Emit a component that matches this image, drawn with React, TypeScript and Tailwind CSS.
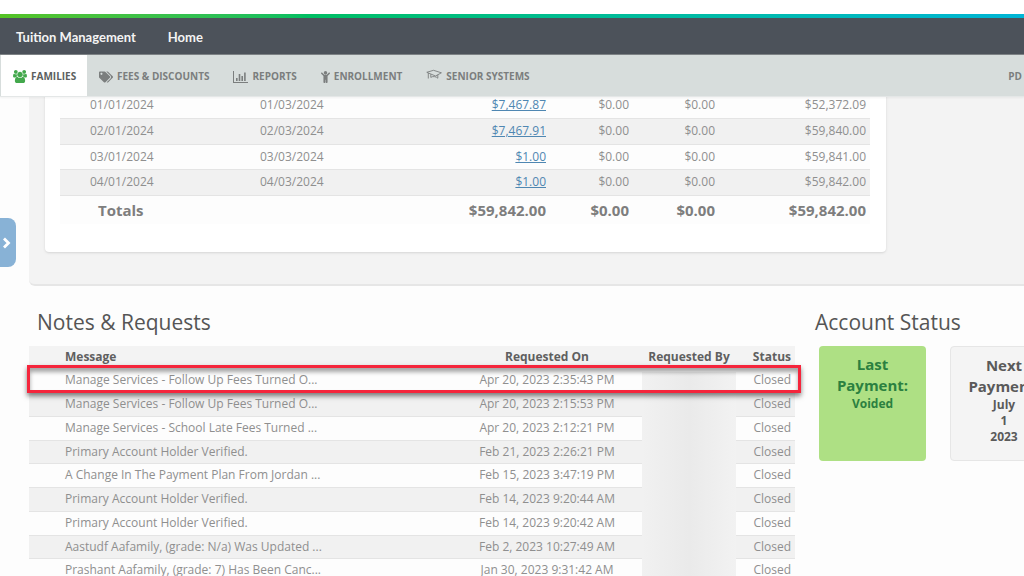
import type { ReactNode } from 'react';
import { FaTags, FaChild } from 'react-icons/fa';

const payments = [
    { due: '01/01/2024', late: '01/03/2024', amount: '$7,467.87', balance: '$52,372.09' },
    { due: '02/01/2024', late: '02/03/2024', amount: '$7,467.91', balance: '$59,840.00' },
    { due: '03/01/2024', late: '03/03/2024', amount: '$1.00', balance: '$59,841.00' },
    { due: '04/01/2024', late: '04/03/2024', amount: '$1.00', balance: '$59,842.00' },
];

const notes = [
    { message: 'Manage Services - Follow Up Fees Turned O...', date: 'Apr 20, 2023 2:35:43 PM' },
    { message: 'Manage Services - Follow Up Fees Turned O...', date: 'Apr 20, 2023 2:15:53 PM' },
    { message: 'Manage Services - School Late Fees Turned ...', date: 'Apr 20, 2023 2:12:21 PM' },
    { message: 'Primary Account Holder Verified.', date: 'Feb 21, 2023 2:26:21 PM' },
    { message: 'A Change In The Payment Plan From Jordan ...', date: 'Feb 15, 2023 3:47:19 PM' },
    { message: 'Primary Account Holder Verified.', date: 'Feb 14, 2023 9:20:44 AM' },
    { message: 'Primary Account Holder Verified.', date: 'Feb 14, 2023 9:20:42 AM' },
    { message: 'Aastudf Aafamily, (grade: N/a) Was Updated ...', date: 'Feb 2, 2023 10:27:49 AM' },
    { message: 'Prashant Aafamily, (grade: 7) Has Been Canc...', date: 'Jan 30, 2023 9:31:42 AM' },
];

function GroupIcon() {
    return (
        <svg className="h-[13px] w-[14px] text-[#43a84c]" viewBox="0 0 1920 1792" fill="currentColor" aria-hidden="true">
            <path d="M593 896q-162 5-265 128H194q-82 0-138-40.5T0 865q0-353 124-353 6 0 43.500 21t97.500 42.500T384 597q67 0 133-23-5 37-5 66 0 139 81 256zm1071 637q0 120-73 189.500t-194 69.500H523q-121 0-194-69.500T256 1533q0-53 3.500-103.500t14-109T300 1212t43-97.500 62-81 85.500-53.500T602 960q10 0 43 21.500t73 48 107 48 135 21.500 135-21.500 107-48 73-48 43-21.500q61 0 111.500 20t85.500 53.500 62 81 43 97.500 26.500 108.500 14 109 3.500 103.500zM640 256q0 106-75 181t-181 75-181-75-75-181 75-181T384 0t181 75 75 181zm704 384q0 159-112.500 271.500T960 1024 688.500 911.500 576 640t112.500-271.500T960 256t271.500 112.500T1344 640zm576 225q0 78-56 118.500t-138 40.500h-134q-103-123-265-128 81-117 81-256 0-29-5-66 66 23 133 23 59 0 119-21.500t97.500-42.500 43.500-21q124 0 124 353zm-128-609q0 106-75 181t-181 75-181-75-75-181 75-181 181-75 181 75 75 181z" />
        </svg>
    );
}

function ChartIcon() {
    return (
        <svg className="h-3 w-[15px]" viewBox="0 0 15 12" fill="currentColor" aria-hidden="true">
            <path d="M0 0h1v11h14v1H0zM3 7h1.600v3H3zM5.700 3h1.600v7H5.700zM8.400 5H10v5H8.400zM11.100 1.500h1.600V10h-1.600z" />
        </svg>
    );
}

function CapIcon() {
    return (
        <svg className="mb-1 h-3 w-4" viewBox="0 0 16 12" fill="none" stroke="currentColor" strokeWidth={0.9} strokeLinejoin="round" aria-hidden="true">
            <path d="M.8 3.300 7.500 1.300 15.400 3.800 9.500 7z" />
            <path d="M4.800 5.200v3.200c1.500-1.400 5.500-1 7 .8V5.800" />
            <path d="M2.300 4v5.500" />
        </svg>
    );
}

function NavTab({ icon, label }: { icon: ReactNode; label: string }) {
    return (
        <a href="#" className="flex items-center gap-1">
            {icon}
            {label}
        </a>
    );
}

function Nav() {
    return (
        <header className="relative z-10">
            <div className="h-[14px] bg-white" />
            <div className="h-1 bg-gradient-to-r from-[#55c324] via-[#00be62] via-30% to-[#00b5d6]" />
            <div className="flex h-[37px] items-center gap-8 border-b border-[#7d8285] bg-[#4c525a] px-4 pt-[3px] font-[Lato,sans-serif] text-[13px] font-bold text-[#f4f4f4]">
                <a href="#">Tuition Management</a>
                <a href="#">Home</a>
            </div>
            <nav className="flex h-[42px] items-center border-b border-[#e4e7e7] bg-[#d7dddc] text-[10px] font-bold text-[#7b7e7e] shadow-xs">
                <a href="#" className="ml-px flex h-full w-[86px] shrink-0 items-center gap-1 bg-white pt-[2px] pl-3 text-[#5c5f60]">
                    <GroupIcon />
                    FAMILIES
                </a>
                <div className="flex grow items-center gap-6 pt-[2px] pl-3">
                    <NavTab icon={<FaTags className="size-[14px]" />} label="FEES & DISCOUNTS" />
                    <NavTab icon={<ChartIcon />} label="REPORTS" />
                    <NavTab icon={<FaChild className="h-3 w-[9px]" />} label="ENROLLMENT" />
                    <NavTab icon={<CapIcon />} label="SENIOR SYSTEMS" />
                </div>
                <a href="#" className="pt-[2px] pr-[2px]">PD</a>
            </nav>
        </header>
    );
}

function PaymentSchedule() {
    return (
        <section className="-mt-1 ml-[29px] rounded-bl-md border-b-2 border-[#e6e6e6] bg-[#f3f3f3] pb-8 pl-4">
            <div className="w-[841px] rounded-b bg-white pr-4 pb-7 pl-[15px] shadow">
                <table className="w-full table-fixed text-right text-xs text-[#8f8f8f]">
                    <colgroup>
                        <col className="w-[170px]" />
                        <col className="w-[170px]" />
                        <col />
                        <col className="w-[83px]" />
                        <col className="w-[86px]" />
                        <col className="w-[155px]" />
                    </colgroup>
                    <tbody>
                        {payments.map((row) => (
                            <tr key={row.due} className="h-[25px] border-b border-[#e4e4e4] bg-[#fdfdfd] even:h-[26px] even:bg-[#f1f1f1]">
                                <td className="pl-[30px] text-left">{row.due}</td>
                                <td className="pl-[30px] text-left">{row.late}</td>
                                <td>
                                    <a href="#" className="text-[#4f87b2] underline">{row.amount}</a>
                                </td>
                                <td>$0.00</td>
                                <td>$0.00</td>
                                <td className="pr-1">{row.balance}</td>
                            </tr>
                        ))}
                    </tbody>
                    <tfoot>
                        <tr className="h-[29px] bg-[#fdfdfd] text-[15px] font-bold text-[#7e7e7e]">
                            <th scope="row" className="pl-[38px] text-left">Totals</th>
                            <td />
                            <td>$59,842.00</td>
                            <td>$0.00</td>
                            <td>$0.00</td>
                            <td className="pr-1">$59,842.00</td>
                        </tr>
                    </tfoot>
                </table>
            </div>
        </section>
    );
}

function NotesRequests() {
    return (
        <section className="w-[766px] shrink-0">
            <h2 className="pl-2 text-[21px] leading-8 text-[#555]">Notes &amp; Requests</h2>
            <div className="relative mt-2">
                <table className="w-full table-fixed text-xs leading-3 text-[#8f8f8f]">
                    <colgroup>
                        <col />
                        <col className="w-[190px]" />
                        <col className="w-[94px]" />
                        <col className="w-[59px]" />
                    </colgroup>
                    <thead>
                        <tr className="h-[22px] bg-[#f3f3f3] text-[#5f5f5f]">
                            <th className="pl-9 text-left">Message</th>
                            <th>Requested On</th>
                            <th className="whitespace-nowrap">Requested By</th>
                            <th className="pr-1 text-right">Status</th>
                        </tr>
                    </thead>
                    <tbody>
                        {notes.map((note) => (
                            <tr key={note.date} className="h-6 border-b border-[#e4e4e4] bg-[#fdfdfd] even:bg-[#f1f1f1] nth-[4n]:h-[23px]">
                                <td className="pl-9 whitespace-nowrap">{note.message}</td>
                                <td className="text-center">{note.date}</td>
                                <td />
                                <td className="pr-1 text-right">Closed</td>
                            </tr>
                        ))}
                    </tbody>
                </table>
                {/* redacted names */}
                <div className="absolute top-[26px] right-[59px] bottom-0 w-[94px] bg-gradient-to-r from-[#f1f1f1] via-[#eaeaea] to-[#f2f2f2]" />
                {/* row highlight */}
                <div className="absolute top-[19px] -right-[6px] -left-[2px] h-7 border-[3px] border-[#f5253c] shadow-[0_3px_5px_rgba(0,0,0,0.5),inset_0_4px_4px_rgba(0,0,0,0.35)]" />
            </div>
        </section>
    );
}

function AccountStatus() {
    return (
        <section className="shrink-0">
            <h2 className="text-[21px] leading-8 text-[#555]">Account Status</h2>
            <div className="mt-2 ml-1 flex gap-6 text-center text-xs leading-4 font-bold">
                <div className="h-[115px] w-[107px] rounded bg-[#aee084] px-3 pt-2 text-[#2b8040]">
                    <h3 className="text-[15px] leading-[21px]">Last Payment:</h3>
                    <p>Voided</p>
                </div>
                <div className="h-[115px] w-[108px] rounded border border-[#e6e6e6] bg-[#f4f4f4] px-3 pt-2 text-[#5a5a5a]">
                    <h3 className="text-[15px] leading-[21px]">Next Payment:</h3>
                    <p>July</p>
                    <p>1</p>
                    <p>2023</p>
                </div>
            </div>
        </section>
    );
}

export default function App() {
    return (
        <div className="relative h-screen overflow-hidden bg-[#fdfdfd] font-['Open_Sans',sans-serif]">
            <Nav />
            <main>
                <PaymentSchedule />
                <div className="flex gap-5 pt-5 pl-[29px]">
                    <NotesRequests />
                    <AccountStatus />
                </div>
            </main>
            <button type="button" aria-label="Open side panel" className="absolute top-[218px] left-0 flex h-[49px] w-4 items-center rounded-r-lg bg-[#88b2d6] pl-[3px] text-white">
                <svg className="h-3 w-2" viewBox="0 0 8 12" fill="none" stroke="currentColor" strokeWidth={2.8} aria-hidden="true">
                    <path d="M1 1.500 5.500 6 1 10.500" />
                </svg>
            </button>
        </div>
    );
}
